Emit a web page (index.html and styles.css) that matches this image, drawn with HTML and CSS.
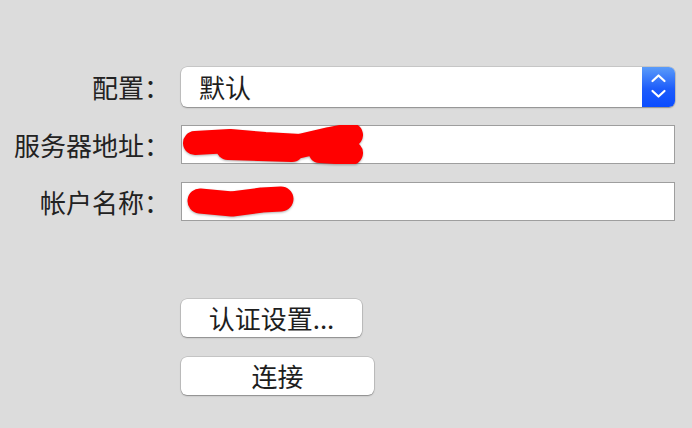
FILE: index.html
```html
<!DOCTYPE html>
<html lang="zh-CN">
<head>
<meta charset="utf-8">
<link rel="stylesheet" href="styles.css">
</head>
<body>
<div class="form">
  <div class="label">配置：</div>
  <div class="popup">
    <span class="popup-text">默认</span>
    <span class="stepper">
      <svg width="33" height="40" viewBox="0 0 33 40">
        <polyline points="10.5,14 16.5,8.5 22.5,14" fill="none" stroke="#fff" stroke-width="2.2" stroke-linecap="round" stroke-linejoin="round"/>
        <polyline points="10.5,24 16.5,29.5 22.5,24" fill="none" stroke="#fff" stroke-width="2.2" stroke-linecap="round" stroke-linejoin="round"/>
      </svg>
    </span>
  </div>

  <div class="label">服务器地址：</div>
  <div class="field">
    <svg class="scribble" width="494" height="39" viewBox="181 125 494 39">
      <g fill="none" stroke="#ff0000" stroke-linecap="round" stroke-linejoin="round" stroke-width="24">
        <polyline points="195,143 230,141 265,144 300,146 330,139 351,135"/>
        <polyline points="228,148 292,150"/>
        <polyline points="320,151 351,153"/>
      </g>
    </svg>
  </div>

  <div class="label">帐户名称：</div>
  <div class="field">
    <svg class="scribble" width="494" height="39" viewBox="181 183 494 39">
      <g fill="none" stroke="#ff0000" stroke-linecap="round" stroke-linejoin="round" stroke-width="25">
        <polyline points="200,202 232,205 262,201 281,200"/>
      </g>
    </svg>
  </div>

  <div class="buttons">
    <button class="btn btn-auth">认证设置...</button>
    <button class="btn btn-connect">连接</button>
  </div>
</div>
</body>
</html>
```

FILE: styles.css
```css
html, body {
  margin: 0;
  padding: 0;
  background: #dcdcdc;
}
body {
  width: 692px;
  height: 428px;
  overflow: hidden;
  font-family: "Noto Sans CJK SC", "Noto Sans", sans-serif;
  color: #222;
}
.form {
  display: grid;
  grid-template-columns: 160px 494px;
  column-gap: 21px;
  row-gap: 18px;
  padding-top: 67px;
  grid-template-rows: 40px 39px 39px auto;
}
.label {
  font-size: 26px;
  line-height: 1;
  text-align: right;
  align-self: center;
  white-space: nowrap;
  margin-right: -10px;
}
.popup {
  display: flex;
  align-items: center;
  background: #fff;
  border-radius: 6px;
  box-shadow: 0 0 0 0.5px rgba(0,0,0,0.18), 0 1px 1.5px rgba(0,0,0,0.3);
  overflow: hidden;
  height: 40px;
}
.popup-text {
  flex: 1;
  padding-left: 18px;
  font-size: 26px;
  line-height: 1;
  color: #1e1e1e;
}
.stepper {
  width: 33px;
  height: 40px;
  background: linear-gradient(#5b9cf9, #1d5cfb 55%, #0a4cff);
  display: block;
}
.stepper svg {
  display: block;
}
.field {
  position: relative;
  background: #fff;
  border: 1px solid #9e9e9e;
  box-sizing: border-box;
  height: 39px;
}
.scribble {
  position: absolute;
  left: -1px;
  top: -1px;
  filter: drop-shadow(0 1px 1px rgba(0,0,0,0.3));
}
.buttons {
  grid-column: 2;
  display: flex;
  flex-direction: column;
  align-items: flex-start;
  gap: 20px;
  margin-top: 60px;
}
.btn {
  font-family: "Noto Sans CJK SC", "Noto Sans", sans-serif;
  font-size: 26px;
  line-height: 1;
  color: #1e1e1e;
  background: #fff;
  border: none;
  border-radius: 6px;
  box-shadow: 0 0 0 0.5px rgba(0,0,0,0.2), 0 1px 1.5px rgba(0,0,0,0.3);
  height: 38px;
  padding: 0;
  margin: 0;
}
.btn-auth {
  width: 181px;
}
.btn-connect {
  width: 193px;
}
```
